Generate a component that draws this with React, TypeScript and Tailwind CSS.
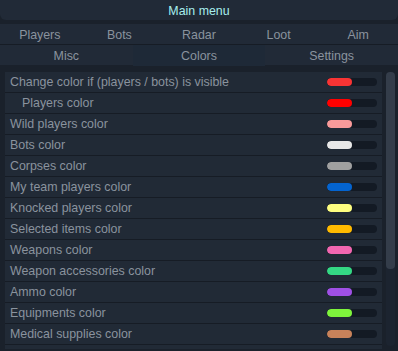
const tabsTop = ['Players', 'Bots', 'Radar', 'Loot', 'Aim']
const tabsBottom = ['Misc', 'Colors', 'Settings']

const rows = [
  { label: 'Change color if (players / bots) is visible', color: 'bg-[#f83434]' },
  { label: 'Players color', color: 'bg-[#ff0000]', indent: true },
  { label: 'Wild players color', color: 'bg-[#f99a9a]' },
  { label: 'Bots color', color: 'bg-[#e8e8e8]' },
  { label: 'Corpses color', color: 'bg-[#a0a0a0]' },
  { label: 'My team players color', color: 'bg-[#0464d0]' },
  { label: 'Knocked players color', color: 'bg-[#fefe80]' },
  { label: 'Selected items color', color: 'bg-[#ffba00]' },
  { label: 'Weapons color', color: 'bg-[#f266b0]' },
  { label: 'Weapon accessories color', color: 'bg-[#34d884]' },
  { label: 'Ammo color', color: 'bg-[#a050e6]' },
  { label: 'Equipments color', color: 'bg-[#7ef43c]' },
  { label: 'Medical supplies color', color: 'bg-[#c8825a]' },
  { label: '', color: 'bg-[#888888]' },
]

export default function App() {
  return (
    <div className="w-[398px] h-[351px] overflow-hidden bg-[#1a212b] flex flex-col font-['Liberation_Sans',Arial,sans-serif] text-[12.4px] text-[#8a939e]">
      {/* Title */}
      <div className="h-[20px] shrink-0 bg-[#212a37] rounded-b-[6px] flex items-center justify-center pt-[3px] text-[#a6eeee]">
        Main menu
      </div>

      {/* Tabs */}
      <div className="mt-[4px] shrink-0 grid grid-cols-5 h-[21px] bg-[#212a37] border-b border-[#161c25]">
        {tabsTop.map((t) => (
          <div key={t} className="flex items-center justify-center pt-[2px]">{t}</div>
        ))}
      </div>
      <div className="shrink-0 grid grid-cols-3 h-[20px] bg-[#212a37]">
        {tabsBottom.map((t) => (
          <div
            key={t}
            className={`flex items-center justify-center pt-[2px] ${t === 'Colors' ? 'bg-[#1e2937]' : ''}`}
          >
            {t}
          </div>
        ))}
      </div>

      {/* Content */}
      <div className="mt-[7px] flex pl-[5px] pr-[3px] gap-[4px] h-[277px] overflow-hidden">
        <div className="flex-1 flex flex-col">
          {rows.map((r, i) => (
            <div
              key={i}
              className="h-[21px] shrink-0 bg-[#212a36] border-b border-[#161c25] flex items-center pr-[5px]"
            >
              <span className={`flex-1 truncate pt-[1px] ${r.indent ? 'pl-[17px]' : 'pl-[5px]'}`}>{r.label}</span>
              <div className="w-[50px] h-[8px] rounded-full bg-[#131a24] flex overflow-hidden">
                <div className={`w-[25px] h-full rounded-full ${r.color}`} />
              </div>
            </div>
          ))}
        </div>

        {/* Scrollbar */}
        <div className="w-[9px] h-[274px] bg-[#1c2430] rounded-[4px] flex flex-col">
          <div className="h-[197px] bg-[#343d4a] rounded-[4px]" />
        </div>
      </div>
    </div>
  )
}
